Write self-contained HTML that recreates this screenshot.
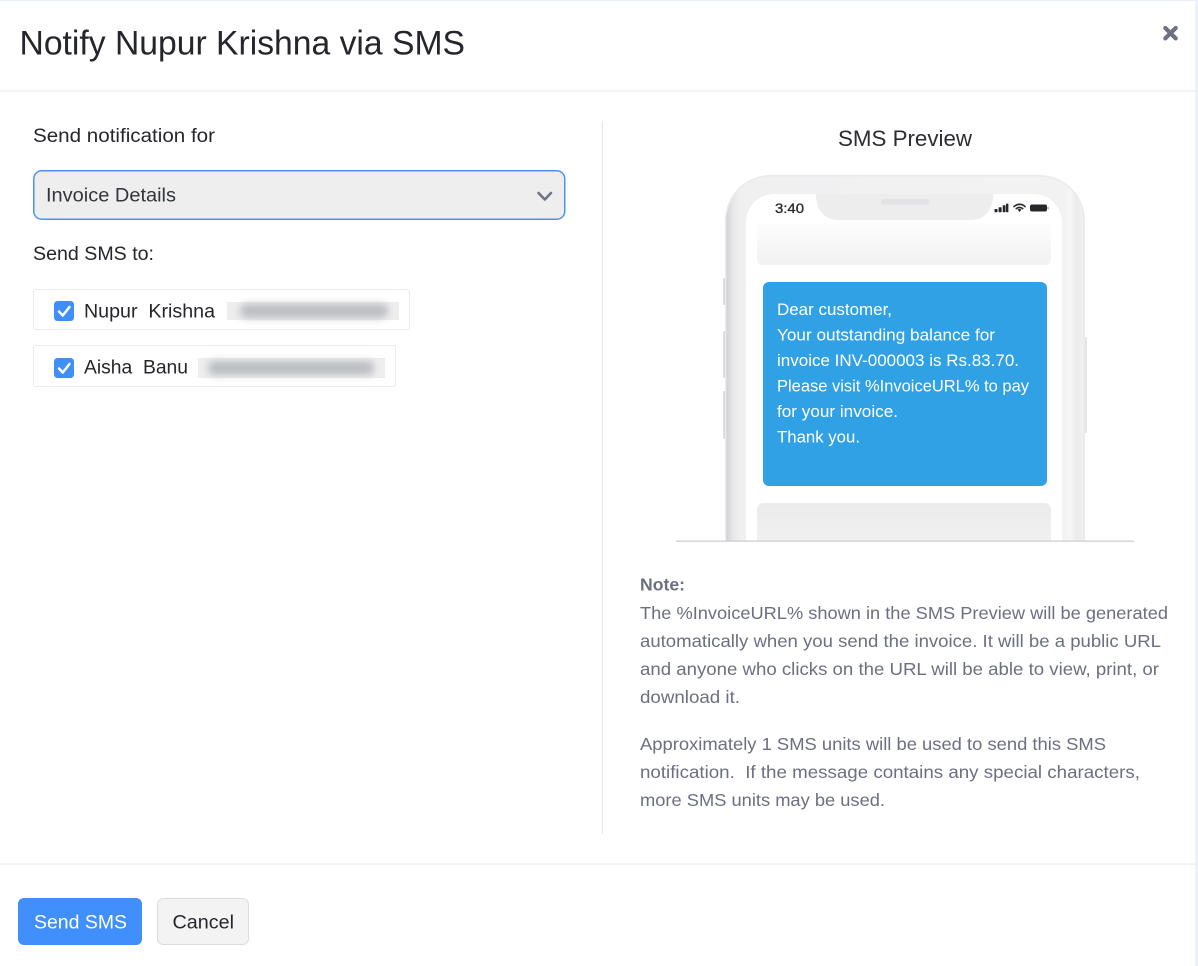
<!DOCTYPE html>
<html lang="en">
<head>
<meta charset="utf-8">
<title>Notify via SMS</title>
<style>
html,body{margin:0;padding:0;background:#fff;width:1198px;height:966px;overflow:hidden}
svg{display:block}
text{font-family:"Liberation Sans",sans-serif;white-space:pre}
.d{fill:#25262c;font-size:19px}
.n{fill:#6c6f80;font-size:17.5px}
.w{fill:#fff;font-size:16.6px}
</style>
</head>
<body>
<svg xmlns="http://www.w3.org/2000/svg" width="1198" height="966" viewBox="0 0 1198 966">
<defs>
<filter id="b" x="-15%" y="-100%" width="130%" height="300%"><feGaussianBlur stdDeviation="4"/></filter>
<linearGradient id="c1" x1="0" y1="0" x2="0" y2="1"><stop offset="0" stop-color="#fdfdfd"/><stop offset="1" stop-color="#f2f2f2"/></linearGradient>
<linearGradient id="c2" x1="0" y1="0" x2="0" y2="1"><stop offset="0" stop-color="#ececec"/><stop offset="1" stop-color="#f2f2f2"/></linearGradient>
<linearGradient id="fr" x1="0" y1="0" x2="1" y2="0"><stop offset="0" stop-color="#c4c5ca"/><stop offset=".008" stop-color="#d6d7da"/><stop offset=".022" stop-color="#e6e7e9"/><stop offset=".04" stop-color="#f0f0f1"/><stop offset=".94" stop-color="#f2f2f3"/><stop offset=".96" stop-color="#f6f6f7"/><stop offset=".975" stop-color="#ececed"/><stop offset="1" stop-color="#f1f1f2"/></linearGradient>
<clipPath id="ph"><rect x="700" y="160" width="410" height="381"/></clipPath>
</defs>

<!-- page edges -->
<rect width="1198" height="966" fill="#fff"/>
<rect x="0" y="0" width="1198" height="1" fill="#eaf0fa"/>
<rect x="1195" y="0" width="3" height="966" fill="#eef1f8"/>

<!-- header -->
<text x="19.5" y="54.5" font-size="34" fill="#24262b" textLength="445.5" lengthAdjust="spacingAndGlyphs">Notify Nupur Krishna via SMS</text>
<path d="M1165.3 28 L1175.7 38.4 M1175.7 28 L1165.3 38.4" stroke="#6f7182" stroke-width="4.2" stroke-linecap="round" fill="none"/>
<rect x="0" y="90.5" width="1195" height="1.2" fill="#ececee"/>

<!-- left column -->
<text class="d" x="33" y="142" textLength="182" lengthAdjust="spacingAndGlyphs">Send notification for</text>
<rect x="33.75" y="170.75" width="531" height="48.5" rx="8" fill="#eeeeee" stroke="#4f93ee" stroke-width="1.5"/>
<text class="d" x="46" y="201.5" style="fill:#33353b" textLength="130" lengthAdjust="spacingAndGlyphs">Invoice Details</text>
<path d="M538.5 193 L544.8 199.5 L551 193" stroke="#707383" stroke-width="2.6" fill="none" stroke-linecap="round" stroke-linejoin="round"/>
<text class="d" x="33" y="260" textLength="121" lengthAdjust="spacingAndGlyphs">Send SMS to:</text>

<rect x="33.5" y="289.5" width="376" height="40" rx="2" fill="#fff" stroke="#ebebed"/>
<rect x="54" y="301" width="20" height="20" rx="3.5" fill="#3e8ff7"/>
<path d="M59 311.5 L62.8 315.5 L69.5 307" stroke="#fff" stroke-width="2.5" fill="none" stroke-linecap="round" stroke-linejoin="round"/>
<text class="d" x="84" y="317.5" textLength="131" lengthAdjust="spacingAndGlyphs">Nupur  Krishna</text>
<rect x="227" y="302" width="172" height="18" fill="#eeeeef"/>
<rect x="240" y="304" width="148" height="14" rx="6" fill="#bcbdc2" filter="url(#b)"/>

<rect x="33.5" y="345.5" width="362" height="41" rx="2" fill="#fff" stroke="#ebebed"/>
<rect x="54" y="358" width="20" height="20" rx="3.5" fill="#3e8ff7"/>
<path d="M59 368.5 L62.8 372.5 L69.5 364" stroke="#fff" stroke-width="2.5" fill="none" stroke-linecap="round" stroke-linejoin="round"/>
<text class="d" x="84" y="373.5" textLength="104" lengthAdjust="spacingAndGlyphs">Aisha  Banu</text>
<rect x="198" y="358" width="187" height="20" fill="#eeeeef"/>
<rect x="208" y="361" width="166" height="14" rx="6" fill="#bcbdc2" filter="url(#b)"/>

<!-- divider -->
<rect x="602" y="121" width="1" height="713" fill="#e8e8ea"/>

<!-- right column -->
<text x="838" y="146" font-size="22" fill="#2b2d33" textLength="134" lengthAdjust="spacingAndGlyphs">SMS Preview</text>

<!-- phone -->
<g clip-path="url(#ph)">
<rect x="723" y="278" width="3" height="27" rx="1" fill="#dcdde0"/>
<rect x="723" y="331" width="3" height="47" rx="1" fill="#dcdde0"/>
<rect x="723" y="391" width="3" height="48" rx="1" fill="#dcdde0"/>
<rect x="1084" y="337" width="3" height="96" rx="1" fill="#e4e5e7"/>
<rect x="725" y="175" width="360" height="420" rx="46" fill="url(#fr)"/>
<rect x="725.75" y="175.75" width="358.5" height="420" rx="45" fill="none" stroke="#e9eaeb" stroke-width="1.5"/>
<path d="M776 194 H816 C816 210 824 220 840 220 H970 C985 220 993 210 993 194 H1032 C1050 194 1062 206 1062 224 V600 H746 V224 C746 206 758 194 776 194 Z" fill="#fff"/>
<path d="M816 194 C816 210 824 220 840 220 H970 C985 220 993 210 993 194 Z" fill="#ededee"/>
<rect x="881" y="199" width="48" height="5.5" rx="2.7" fill="#e3e3e5"/>
<rect x="757" y="223" width="294" height="42" rx="5" fill="url(#c1)"/>
<rect x="757" y="503" width="294" height="60" rx="6" fill="url(#c2)"/>
</g>
<text x="775" y="213" font-size="14" fill="#2b2c30" stroke="#2b2c30" stroke-width=".35" textLength="29" lengthAdjust="spacingAndGlyphs">3:40</text>
<g fill="#26272b">
<rect x="994.5" y="209" width="3" height="3.2" rx=".6"/>
<rect x="998.6" y="207.2" width="3" height="5" rx=".6"/>
<rect x="1002.7" y="205.2" width="2.8" height="7" rx=".6"/>
<rect x="1006" y="203.6" width="2.4" height="8.6" rx=".6"/>
<rect x="1030" y="204.5" width="17" height="7" rx="2"/>
<rect x="1047.4" y="206.8" width="1.3" height="2.6" rx=".5" fill="#9a9b9f"/>
<path d="M1017.6 209.6 L1019.5 212 L1021.4 209.6 C1020.2 208.7 1018.8 208.7 1017.6 209.6 Z"/>
</g>
<path d="M1014 206.6 C1017.2 203.6 1021.8 203.6 1025 206.6 M1016.3 208.6 C1018.1 207.1 1020.9 207.1 1022.7 208.6" stroke="#26272b" stroke-width="1.6" fill="none" stroke-linecap="round"/>

<rect x="763" y="282" width="284" height="204" rx="6" fill="#30a1e4"/>
<text class="w" x="777" y="315" textLength="115" lengthAdjust="spacingAndGlyphs">Dear customer,</text>
<text class="w" x="777" y="340.5" textLength="218" lengthAdjust="spacingAndGlyphs">Your outstanding balance for</text>
<text class="w" x="777" y="366" textLength="242" lengthAdjust="spacingAndGlyphs">invoice INV-000003 is Rs.83.70.</text>
<text class="w" x="777" y="391.5" textLength="252" lengthAdjust="spacingAndGlyphs">Please visit %InvoiceURL% to pay</text>
<text class="w" x="777" y="417" textLength="121" lengthAdjust="spacingAndGlyphs">for your invoice.</text>
<text class="w" x="777" y="442.5" textLength="83" lengthAdjust="spacingAndGlyphs">Thank you.</text>

<rect x="676" y="540.5" width="458" height="1.3" fill="#cfd0d4"/>

<!-- note -->
<text class="n" x="640" y="590.5" font-weight="bold" textLength="45" lengthAdjust="spacingAndGlyphs">Note:</text>
<text class="n" x="640" y="619" textLength="528" lengthAdjust="spacingAndGlyphs">The %InvoiceURL% shown in the SMS Preview will be generated</text>
<text class="n" x="640" y="647" textLength="521" lengthAdjust="spacingAndGlyphs">automatically when you send the invoice. It will be a public URL</text>
<text class="n" x="640" y="675" textLength="519" lengthAdjust="spacingAndGlyphs">and anyone who clicks on the URL will be able to view, print, or</text>
<text class="n" x="640" y="703" textLength="100" lengthAdjust="spacingAndGlyphs">download it.</text>
<text class="n" x="640" y="750" textLength="466" lengthAdjust="spacingAndGlyphs">Approximately 1 SMS units will be used to send this SMS</text>
<text class="n" x="640" y="778" textLength="500" lengthAdjust="spacingAndGlyphs">notification.  If the message contains any special characters,</text>
<text class="n" x="640" y="806" textLength="245" lengthAdjust="spacingAndGlyphs">more SMS units may be used.</text>

<!-- footer -->
<rect x="0" y="863.5" width="1195" height="1.2" fill="#ececee"/>
<rect x="18" y="898" width="124" height="47" rx="6" fill="#408ffc"/>
<text x="34" y="928.5" font-size="19.5" fill="#fff" textLength="93" lengthAdjust="spacingAndGlyphs">Send SMS</text>
<rect x="157.5" y="898.5" width="91" height="46" rx="6" fill="#f3f3f4" stroke="#dcdcde"/>
<text x="172.5" y="928.5" font-size="19.5" fill="#25262c" textLength="61.5" lengthAdjust="spacingAndGlyphs">Cancel</text>
</svg>
</body>
</html>
